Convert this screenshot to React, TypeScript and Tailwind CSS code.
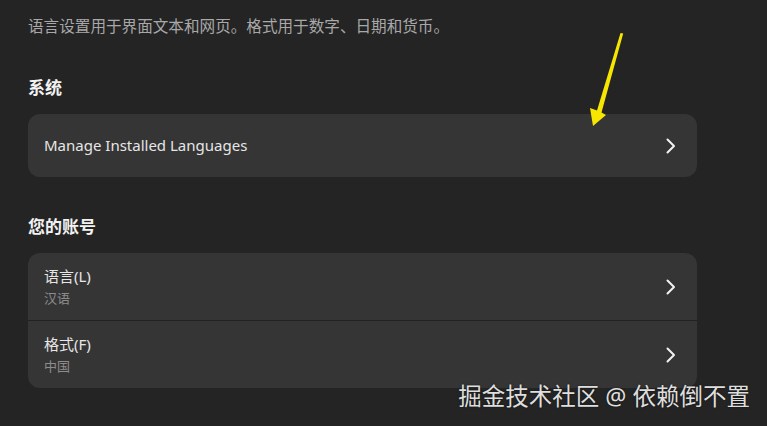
const cjk = "font-['Noto_Sans','Noto_Sans_CJK_SC',sans-serif]";

function Chevron() {
  return (
    <svg width="12" height="16" viewBox="0 0 12 16" fill="none" className="shrink-0">
      <path d="M2.5 1.5 9 8l-6.5 6.5" stroke="#f2f2f2" strokeWidth="2" strokeLinecap="round" strokeLinejoin="round" />
    </svg>
  );
}

function Row({ title, sub }: { title: string; sub: string }) {
  return (
    <div className="flex h-[67px] items-center justify-between pl-4 pr-[20px]">
      <div className="flex flex-col gap-[3px]">
        <span className="text-[15px] leading-5 text-[#e6e6e6]">{title}</span>
        <span className="text-[13px] leading-[18px] text-[#8c8c8c]">{sub}</span>
      </div>
      <Chevron />
    </div>
  );
}

export default function App() {
  return (
    <div className={`relative h-[426px] w-[767px] overflow-hidden bg-[#242424] ${cjk}`}>
      <div className="flex w-[697px] flex-col pl-[28px] pt-[14px]">
        <p className="text-[15.6px] leading-6 text-[#a8a8a8]">
          语言设置用于界面文本和网页。格式用于数字、日期和货币。
        </p>

        <h2 className="mt-[38px] text-[17px] font-bold leading-6 text-[#f2f2f2]">系统</h2>
        <div className="mt-[14px] flex h-[63px] items-center justify-between rounded-xl bg-[#353535] pl-4 pr-[20px]">
          <span className="text-[15px] text-[#e6e6e6]">Manage Installed Languages</span>
          <Chevron />
        </div>

        <h2 className="mt-[38px] text-[17px] font-bold leading-6 text-[#f2f2f2]">您的账号</h2>
        <div className="mt-[14px] flex flex-col rounded-xl bg-[#353535]">
          <Row title="语言(L)" sub="汉语" />
          <div className="h-px bg-[#222222]" />
          <Row title="格式(F)" sub="中国" />
        </div>
      </div>

      {/* annotation arrow */}
      <svg className="absolute left-0 top-0" width="767" height="426" viewBox="0 0 767 426">
        <polygon
          points="620.5,33 623.2,33.6 601.5,112.5 606,115 593,126 590,108 597,110.5"
          fill="#f7e600"
        />
      </svg>

      <div className="absolute bottom-[16px] right-[17px] text-[23.5px] leading-7 text-[#dedede] [text-shadow:0_0_2px_rgba(0,0,0,0.6)]">
        掘金技术社区 @ 依赖倒不置
      </div>
    </div>
  );
}
